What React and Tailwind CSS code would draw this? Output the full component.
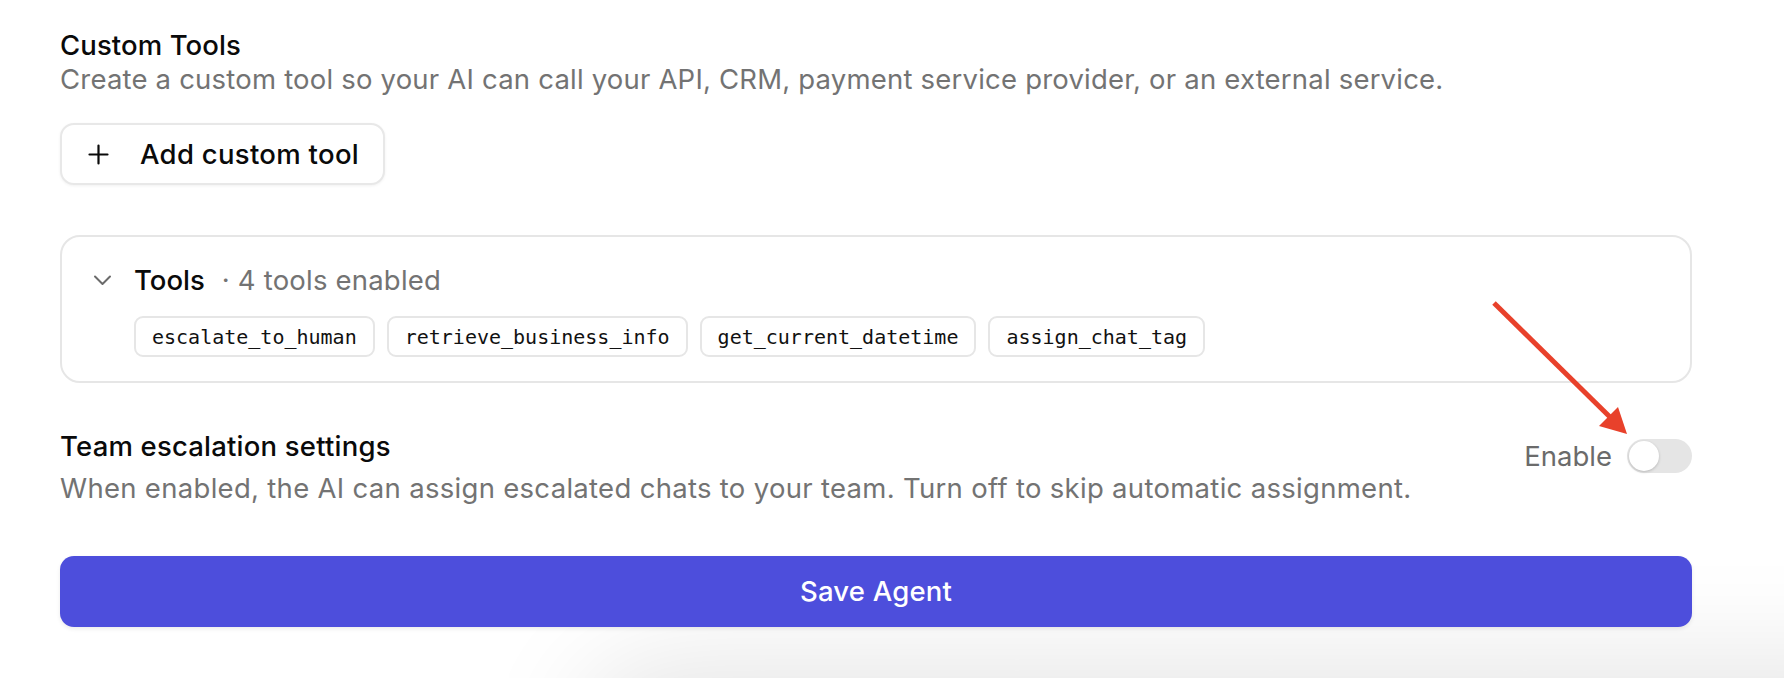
import React from "react";

const chips = ["escalate_to_human", "retrieve_business_info", "get_current_datetime", "assign_chat_tag"];

export default function App() {
  return (
    <div className="relative h-[678px] w-[1784px] overflow-hidden bg-white" style={{ fontFamily: "Inter, 'Noto Sans', sans-serif" }}>
      {/* bottom shadow of an element below */}
      <div className="pointer-events-none absolute left-[620px] top-[700px] h-[200px] w-[1400px] rounded-[40px] bg-white shadow-[0_0_110px_40px_rgba(0,0,0,0.10)]" />

      <div className="relative flex w-[1632px] flex-col pl-[60px] pt-[28px] box-content">
        <div className="text-[27.5px] font-medium leading-[34px] tracking-[0.1px] text-[#0a0a0a]">Custom Tools</div>
        <div className="text-[27.5px] leading-[34px] tracking-[0.2px] text-[#737373]">
          Create a custom tool so your AI can call your API, CRM, payment service provider, or an external service.
        </div>

        <div className="mt-[27px]">
          <button className="flex h-[62px] items-center gap-[31px] rounded-[14px] border-2 border-[#e8e8e8] bg-white pl-[26px] pr-[24px] shadow-[0_1px_3px_rgba(0,0,0,0.06)]">
            <svg width="21" height="21" viewBox="0 0 21 21" fill="none" stroke="#0a0a0a" strokeWidth="2.2" strokeLinecap="round">
              <path d="M10.5 1.5v18M1.5 10.5h18" />
            </svg>
            <span className="text-[27.5px] font-medium leading-[34px] tracking-[0.3px] text-[#0a0a0a]">Add custom tool</span>
          </button>
        </div>

        <div className="mt-[50px] h-[148px] rounded-[20px] border-2 border-[#e6e6e6] bg-white pl-[31px] pt-[26px]">
          <div className="flex h-[34px] items-center">
            <svg width="19" height="12" viewBox="0 0 19 12" fill="none" stroke="#6b6b6b" strokeWidth="2" strokeLinecap="round" strokeLinejoin="round">
              <path d="M2 2.5l7.5 7.5L17 2.5" />
            </svg>
            <span className="ml-[22px] text-[27.5px] font-medium leading-[34px] text-[#0a0a0a]">Tools</span>
            <span className="ml-[17px] text-[27.5px] leading-[34px] tracking-[0.2px] text-[#737373]">· 4 tools enabled</span>
          </div>
          <div className="ml-[41px] mt-[19px] flex gap-[12px]">
            {chips.map((c) => (
              <div
                key={c}
                className="flex h-[41px] items-center rounded-[9px] border-2 border-[#e6e6e6] px-[16px] text-[20px] text-[#111]"
                style={{ fontFamily: "'DejaVu Sans Mono', 'Liberation Mono', monospace" }}
              >
                {c}
              </div>
            ))}
          </div>
        </div>

        <div className="mt-[46px] flex items-start justify-between">
          <div className="flex flex-col">
            <div className="text-[27.5px] font-medium leading-[34px] tracking-[0.2px] text-[#0a0a0a]">Team escalation settings</div>
            <div className="mt-[8px] text-[27.5px] leading-[34px] tracking-[0.3px] text-[#737373]">
              When enabled, the AI can assign escalated chats to your team. Turn off to skip automatic assignment.
            </div>
          </div>
          <div className="mt-[10px] flex items-center gap-[15px]">
            <span className="text-[27.5px] leading-[34px] text-[#6b6b6b]">Enable</span>
            <div className="flex h-[34px] w-[65px] items-center rounded-full bg-[#e5e5e5] p-[2px]">
              <div className="h-[30px] w-[30px] rounded-full bg-white shadow-[0_1px_3px_rgba(0,0,0,0.2)]" />
            </div>
          </div>
        </div>

        <button className="mt-[51px] flex h-[71px] w-full items-center justify-center rounded-[14px] bg-[#4d4edc] text-[27.5px] font-medium tracking-[0.2px] text-white shadow-[0_2px_4px_rgba(0,0,0,0.08)]">
          Save Agent
        </button>
      </div>

      {/* annotation arrow */}
      <svg className="pointer-events-none absolute left-0 top-0" width="1784" height="678">
        <line x1="1494" y1="303" x2="1612" y2="419" stroke="#e8412b" strokeWidth="5" strokeLinecap="butt" />
        <polygon points="1627,434 1599,426 1618,407" fill="#e8412b" />
      </svg>
    </div>
  );
}
